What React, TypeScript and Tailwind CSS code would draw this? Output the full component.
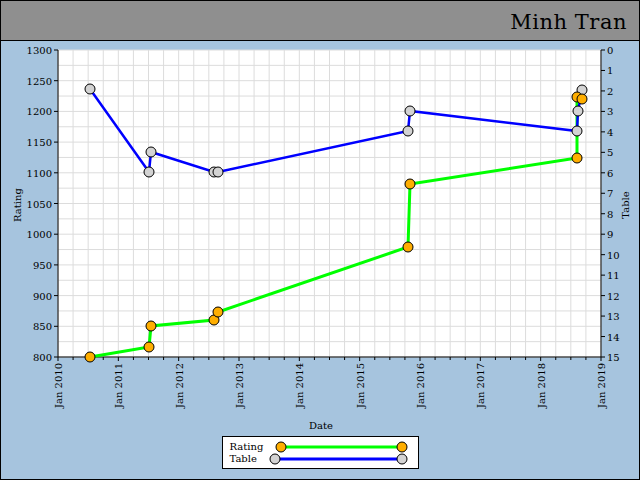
import React from "react";

const X0 = 57, X1 = 600, Y0 = 50, Y1 = 357;
const ry = (r: number) => Y1 - ((r - 800) / 500) * (Y1 - Y0);
const ty = (t: number) => Y0 + (t / 15) * (Y1 - Y0);

const rating: [number, number][] = [[89,357],[148,347],[150,326],[213,320],[217,312],[407,247],[409,184],[576,158],[576,97],[581,99]];
const table: [number, number][] = [[89,89],[148,172],[150,152],[213,172],[217,172],[407,131],[409,111],[576,131],[577,111],[581,90]];

function Chart() {
  const vlines = [];
  for (let i = 0; i <= 36; i++) vlines.push(X0 + (i * (X1 - X0)) / 36);
  const hlines = [];
  for (let r = 800; r <= 1300; r += 25) hlines.push(ry(r));
  const years = Array.from({ length: 10 }, (_, i) => 2010 + i);
  const f = { fontFamily: "'DejaVu Serif', serif", fontSize: 10, fill: "#000" };
  return (
    <svg width={640} height={395} viewBox="0 41 640 395" className="block">
      <rect x={X0} y={Y0} width={X1 - X0} height={Y1 - Y0} fill="#fff" />
      {vlines.map((x, i) => <line key={"v" + i} x1={x} x2={x} y1={Y0} y2={Y1} stroke="#dcdcdc" />)}
      {hlines.map((y, i) => <line key={"h" + i} x1={X0} x2={X1} y1={y} y2={y} stroke="#dcdcdc" />)}
      <line x1={X0} x2={X0} y1={Y0} y2={Y1} stroke="#000" />
      <line x1={X1} x2={X1} y1={Y0} y2={Y1} stroke="#000" />
      <line x1={X0} x2={X1} y1={Y1} y2={Y1} stroke="#000" />
      {[800,850,900,950,1000,1050,1100,1150,1200,1250,1300].map(r => (
        <g key={r}>
          <line x1={X0 - 4} x2={X0} y1={ry(r)} y2={ry(r)} stroke="#000" />
          <text x={X0 - 6} y={ry(r) + 4} textAnchor="end" {...f}>{r}</text>
        </g>
      ))}
      {Array.from({ length: 16 }, (_, t) => (
        <g key={t}>
          <line x1={X1} x2={X1 + 4} y1={ty(t)} y2={ty(t)} stroke="#000" />
          <text x={X1 + 6} y={ty(t) + 4} {...f}>{t}</text>
        </g>
      ))}
      {vlines.map((x, i) => <line key={"t" + i} x1={x} x2={x} y1={Y1} y2={Y1 + (i % 4 === 0 ? 4 : 3)} stroke="#000" />)}
      {years.map((y, i) => {
        const x = X0 + (i * (X1 - X0)) / 9;
        return <text key={y} transform={`translate(${x + 4},${Y1 + 6}) rotate(-90)`} textAnchor="end" {...f}>Jan {y}</text>;
      })}
      <text x={320} y={429} textAnchor="middle" {...f}>Date</text>
      <text transform="translate(20,205) rotate(-90)" textAnchor="middle" {...f}>Rating</text>
      <text transform="translate(628,205) rotate(-90)" textAnchor="middle" {...f}>Table</text>
      <polyline points={rating.map(p => p.join(",")).join(" ")} fill="none" stroke="#00ff00" strokeWidth={3} />
      <polyline points={table.map(p => p.join(",")).join(" ")} fill="none" stroke="#0000ff" strokeWidth={2.5} />
      {table.map((p, i) => <ellipse key={"tb" + i} cx={p[0]} cy={p[1]} rx={5} ry={5} fill="#d3d3d3" stroke="#000" />)}
      {rating.map((p, i) => <ellipse key={"ra" + i} cx={p[0]} cy={p[1]} rx={5} ry={5} fill="#ffae00" stroke="#000" />)}
    </svg>
  );
}

function LegendLine({ color, fill, w }: { color: string; fill: string; w: number }) {
  return (
    <svg width={w + 12} height={12}>
      <line x1={6} x2={w + 6} y1={6} y2={6} stroke={color} strokeWidth={3} />
      <circle cx={6} cy={6} r={5} fill={fill} stroke="#000" />
      <circle cx={w + 6} cy={6} r={5} fill={fill} stroke="#000" />
    </svg>
  );
}

export default function App() {
  return (
    <div className="w-[640px] h-[480px] border border-black bg-[#a6c4de] flex flex-col overflow-hidden box-border" style={{ fontFamily: "'DejaVu Serif', serif" }}>
      <div className="h-[40px] shrink-0 bg-[#8f8f8f] border-b border-black flex items-center justify-end pr-3 pt-1">
        <span className="text-[21px] text-black font-['DejaVu_Sans',sans-serif] font-extralight tracking-wide">Minh Tran</span>
      </div>
      <Chart />
      <div className="flex justify-center">
        <div className="w-[197px] h-[33px] bg-white border border-black flex flex-col justify-center text-[10px] leading-[12px]">
          <div className="flex items-center"><span className="w-[52px] pl-[7px]">Rating</span><LegendLine color="#00ff00" fill="#ffae00" w={121} /></div>
          <div className="flex items-center"><span className="w-[46px] pl-[7px]">Table</span><LegendLine color="#0000ff" fill="#d3d3d3" w={127} /></div>
        </div>
      </div>
    </div>
  );
}
